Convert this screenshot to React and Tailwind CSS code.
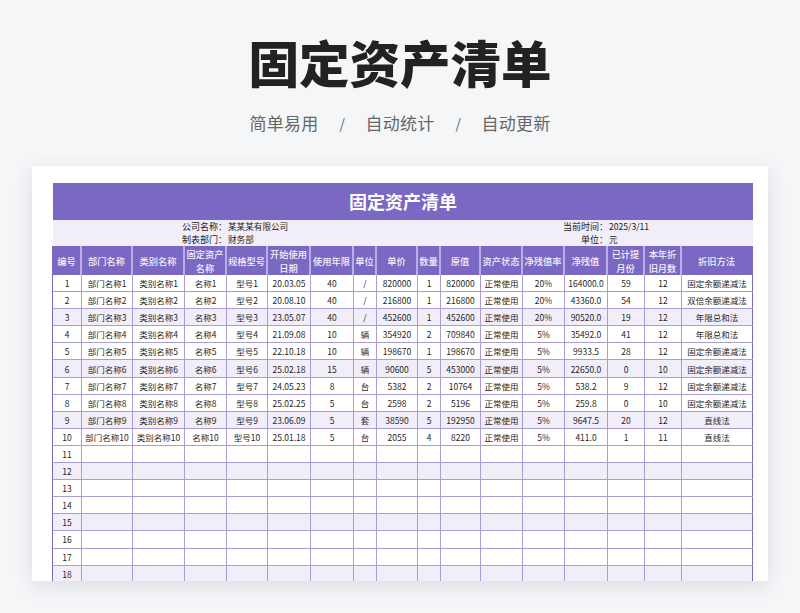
const cols = "grid grid-cols-[29px_51px_52px_42px_41px_43px_43px_23px_41px_23px_40px_42px_42px_43px_37px_37px_71px]";

const headers = ["编号","部门名称","类别名称","固定资产\n名称","规格型号","开始使用\n日期","使用年限","单位","单价","数量","原值","资产状态","净残值率","净残值","已计提\n月份","本年折\n旧月数","折旧方法"];

const raw = [
  ["20.03.05","40","/","820000","1","820000","20%","164000.0","59","12","固定余额递减法"],
  ["20.08.10","40","/","216800","1","216800","20%","43360.0","54","12","双倍余额递减法"],
  ["23.05.07","40","/","452600","1","452600","20%","90520.0","19","12","年限总和法"],
  ["21.09.08","10","辆","354920","2","709840","5%","35492.0","41","12","年限总和法"],
  ["22.10.18","10","辆","198670","1","198670","5%","9933.5","28","12","固定余额递减法"],
  ["25.02.18","15","辆","90600","5","453000","5%","22650.0","0","10","固定余额递减法"],
  ["24.05.23","8","台","5382","2","10764","5%","538.2","9","12","固定余额递减法"],
  ["25.02.25","5","台","2598","2","5196","5%","259.8","0","10","固定余额递减法"],
  ["23.06.09","5","套","38590","5","192950","5%","9647.5","20","12","直线法"],
  ["25.01.18","5","台","2055","4","8220","5%","411.0","1","11","直线法"],
];

const rows = Array.from({ length: 18 }, (_, i) => {
  const n = i + 1;
  const r = raw[i];
  if (!r) return [String(n), ...Array(16).fill("")];
  return [String(n), `部门名称${n}`, `类别名称${n}`, `名称${n}`, `型号${n}`, r[0], r[1], r[2], r[3], r[4], r[5], "正常使用", r[6], r[7], r[8], r[9], r[10]];
});

export default function App() {
  return (
    <div className="h-[613px] w-[800px] overflow-hidden bg-[#f5f6f8] font-['Noto_Sans_CJK_SC',sans-serif]">
      <header className="flex h-[166px] flex-col items-center">
        <h1 className="mt-[27px] text-[50.5px] leading-[68px] font-black text-[#222222]">固定资产清单</h1>
        <div className="mt-[16px] flex items-center gap-[21px] text-[17px] leading-[24px] tracking-[0.25px] text-[#666666]">
          <span>简单易用</span>
          <span className="w-[5px] text-center text-[14px]">/</span>
          <span>自动统计</span>
          <span className="w-[5px] text-center text-[14px]">/</span>
          <span>自动更新</span>
        </div>
      </header>

      <main className="mx-[32px] h-[415px] overflow-hidden bg-white pl-[20px] pt-[17px] shadow-[0_5px_18px_rgba(40,50,70,0.12)]">
        <div className="w-[701px]">
          <div className="ml-[1px] flex h-[37px] w-[700px] items-center justify-center bg-[#7a68c2] text-[18px] font-bold text-white">固定资产清单</div>

          <div className="ml-[1px] grid h-[26px] w-[700px] grid-cols-[174px_196px_185px_145px] grid-rows-2 items-center bg-[#f1eef9] text-[9px] leading-[13px] text-[#222222]">
            <span className="text-right col-start-1">公司名称：</span>
            <span className="pl-[1px] text-[8.6px]">某某某有限公司</span>
            <span className="text-right">当前时间：</span>
            <span className="pl-[1px] text-[8.6px]">2025/3/11</span>
            <span className="text-right col-start-1">制表部门：</span>
            <span className="pl-[1px] text-[8.6px]">财务部</span>
            <span className="text-right">单位：</span>
            <span className="pl-[1px] text-[8.6px]">元</span>
          </div>

          <div className={`${cols} h-[29px] w-[701px] border-l border-[#7a68c2] bg-[#7a68c2] text-[9.25px] leading-[14px] font-medium text-[#f3f0fb]`}>
            {headers.map((h, i) => (
              <div key={i} className="flex items-center justify-center whitespace-pre-line border-r-2 border-[#b9afe2] text-center last:border-[#7a68c2]">{h}</div>
            ))}
          </div>

          {rows.map((row, ri) => (
            <div key={ri} className={`${cols} h-[17.1px] w-[701px] border-b border-l border-[#a99dd6] border-l-[#7a68c2] text-[8.5px] leading-[16px] text-[#1f1f1f] ${(ri + 1) % 3 === 0 ? "bg-[#f1eef9]" : "bg-white"}`}>
              {row.map((c, ci) => (
                <div key={ci} className={`flex items-center justify-center overflow-hidden whitespace-nowrap border-r ${ci === 16 ? "border-[#7a68c2]" : "border-[#a99dd6]"}`}>{c}</div>
              ))}
            </div>
          ))}
        </div>
      </main>
    </div>
  );
}
